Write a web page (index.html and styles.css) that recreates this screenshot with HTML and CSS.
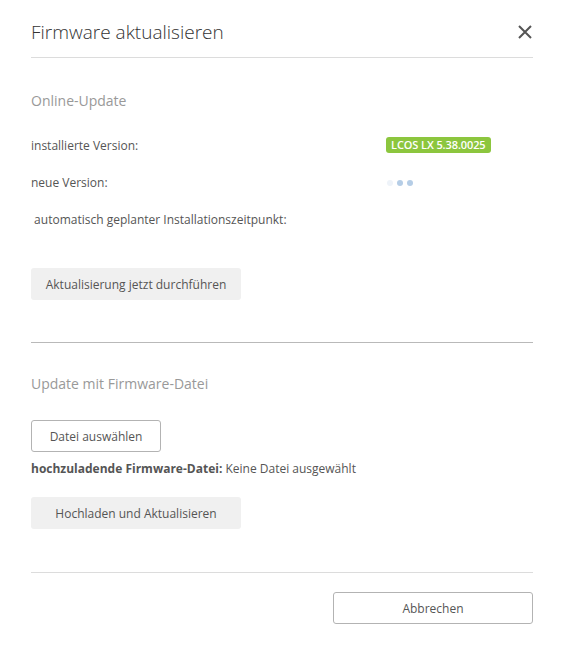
FILE: index.html
```html
<!DOCTYPE html>
<html lang="de">
<head>
<meta charset="utf-8">
<link rel="stylesheet" href="styles.css">
</head>
<body>
<div class="modal">
  <header class="modal-header">
    <h1 class="modal-title">Firmware aktualisieren</h1>
    <button class="close" aria-label="Schließen">
      <svg width="14" height="14" viewBox="0 0 14 14"><path d="M1 1 L13 13 M13 1 L1 13" stroke="#555" stroke-width="2" fill="none"/></svg>
    </button>
  </header>

  <section class="section online">
    <h2 class="section-title">Online-Update</h2>
    <div class="row row-installed">
      <span class="label">installierte Version:</span>
      <span class="value"><span class="badge">LCOS LX 5.38.0025</span></span>
    </div>
    <div class="row row-new">
      <span class="label">neue Version:</span>
      <span class="value"><span class="dots"><i class="d1"></i><i class="d2"></i><i class="d3"></i></span></span>
    </div>
    <div class="row row-auto">
      <span class="label">&nbsp;automatisch geplanter Installationszeitpunkt:</span>
    </div>
    <button class="btn btn-grey btn-update">Aktualisierung jetzt durchführen</button>
  </section>

  <hr class="divider-strong">

  <section class="section file">
    <h2 class="section-title">Update mit Firmware-Datei</h2>
    <button class="btn btn-outline btn-file">Datei auswählen</button>
    <p class="file-info"><b>hochzuladende Firmware-Datei:</b> Keine Datei ausgewählt</p>
    <button class="btn btn-grey btn-upload">Hochladen und Aktualisieren</button>
  </section>

  <footer class="modal-footer">
    <button class="btn btn-outline btn-cancel">Abbrechen</button>
  </footer>
</div>
</body>
</html>
```

FILE: styles.css
```css
* { box-sizing: border-box; }
html, body { margin: 0; padding: 0; background: #fff; }
body {
  font-family: "Open Sans", "Liberation Sans", sans-serif;
  color: #555;
  font-size: 12px;
}
.modal {
  width: 564px;
  padding: 0 31px;
}
.modal-header {
  display: flex;
  align-items: center;
  justify-content: space-between;
  height: 58px;
  padding-top: 6px;
  border-bottom: 1px solid #dcdcdc;
}
.modal-title {
  margin: 0;
  font-weight: 300;
  font-size: 19px;
  color: #333;
  letter-spacing: 0;
}
.close {
  border: 0;
  background: none;
  padding: 0;
  margin-right: 1px;
  width: 14px;
  height: 14px;
  display: flex;
}
.section-title {
  margin: 0;
  font-weight: 400;
  font-size: 14px;
  color: #999;
  line-height: 20px;
}
.online { padding-top: 33px; }
.online .section-title { margin-bottom: 25px; }
.row {
  display: flex;
  align-items: center;
  height: 18px;
  margin-bottom: 19px;
}
.label { width: 355px; color: #555; }
.value { display: flex; align-items: center; }
.badge {
  background: #8cc63e;
  color: #fff;
  font-weight: 600;
  font-size: 11px;
  line-height: 16px;
  padding: 0 5px;
  border-radius: 3px;
  letter-spacing: -0.1px;
}
.dots { display: flex; gap: 4px; padding-left: 1px; margin-top: 2px; }
.dots i { width: 6px; height: 6px; border-radius: 50%; background: #b5cde6; display: block; }
.dots .d1 { background: #eef3f9; }
.row-auto { margin-bottom: 40px; }
.btn {
  font-family: "Open Sans", "Liberation Sans", sans-serif;
  font-size: 12px;
  color: #555;
  height: 32px;
  border-radius: 3px;
  padding: 0;
  cursor: pointer;
}
.btn-grey {
  background: #f0f0f0;
  border: 0;
  width: 210px;
}
.btn-outline {
  background: #fff;
  border: 1px solid #b3b3b3;
}
.divider-strong {
  margin: 42px 0 0;
  border: 0;
  border-top: 1px solid #b9b9b9;
}
.file { padding-top: 31px; }
.file .section-title { margin-bottom: 26px; }
.btn-file { width: 130px; }
.file-info { margin: 8px 0 20px; line-height: 17px; color: #555; }
.file-info b { font-weight: 700; }
.modal-footer {
  margin-top: 43px;
  border-top: 1px solid #dcdcdc;
  padding-top: 19px;
  display: flex;
  justify-content: flex-end;
}
.btn-cancel { width: 200px; }
```
